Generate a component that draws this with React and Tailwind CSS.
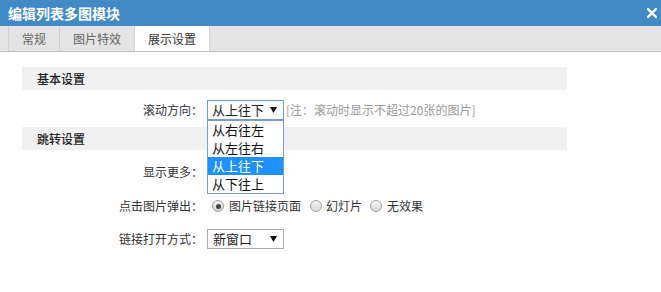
import React from "react";

const Arrow = () => (
  <svg width="7" height="6" viewBox="0 0 7 6" className="shrink-0">
    <polygon points="0,0 7,0 3.5,6" fill="#111" />
  </svg>
);

const Radio = ({ checked, className = "" }) => (
  <span
    className={
      "relative inline-flex h-[12px] w-[12px] shrink-0 items-center justify-center rounded-full border border-[#a0a0a0] bg-gradient-to-b from-[#f4f4f4] to-[#d8d8d8] " +
      className
    }
  >
    {checked && <span className="h-[5px] w-[5px] rounded-full bg-[#444]" />}
  </span>
);

export default function App() {
  const font = { fontFamily: '"Noto Sans CJK SC", "Noto Sans", sans-serif' };
  return (
    <div className="relative h-[292px] w-[661px] overflow-hidden bg-white text-[12px] text-[#333]" style={font}>
      {/* title bar */}
      <div className="flex h-[26px] items-center justify-between bg-[#4189c7] pl-[8px] pr-[4px]">
        <span className="text-[14px] font-bold leading-none text-white">编辑列表多图模块</span>
        <svg width="10" height="10" viewBox="0 0 10 10" className="mr-[0px]">
          <path d="M1 1 L9 9 M9 1 L1 9" stroke="#fff" strokeWidth="2.4" strokeLinecap="square" />
        </svg>
      </div>
      {/* tabs */}
      <div className="flex h-[26px] items-stretch border-b border-[#bdbdbd] bg-[#e4e4e4] pl-[8px]">
        <div className="flex items-center border-l border-[#cfcfcf] px-[13px] text-[#666]">常规</div>
        <div className="flex items-center border-l border-[#cfcfcf] px-[13px] text-[#666]">图片特效</div>
        <div className="flex items-center border-x border-[#cfcfcf] bg-white px-[13px] text-[#333]">展示设置</div>
      </div>

      {/* content */}
      <div className="pl-[22px]">
        <div className="mt-[15px] flex h-[23px] w-[545px] items-center bg-[#f0f0f0] pl-[15px] font-medium text-[#222]">基本设置</div>

        <div className="mt-[10px] flex h-[20px] items-center">
          <div className="w-[181px] text-right">滚动方向：</div>
          <div className="relative ml-[4px]">
            <div className="flex h-[20px] w-[77px] items-center justify-between border border-[#6f9bd6] pl-[4px] pr-[6px] text-[13px] text-[#222]">
              <span>从上往下</span>
              <Arrow />
            </div>
            <div className="absolute left-0 top-[20px] z-10 w-[77px] border border-[#7d9ac9] bg-white text-[13px] text-[#111]">
              <div className="flex h-[18px] items-center pl-[4px]">从右往左</div>
              <div className="flex h-[18px] items-center pl-[4px]">从左往右</div>
              <div className="flex h-[18px] items-center bg-[#1e90ff] pl-[4px] text-white">从上往下</div>
              <div className="flex h-[18px] items-center pl-[4px]">从下往上</div>
            </div>
          </div>
          <span className="ml-[2px] text-[#999]">[注：滚动时显示不超过20张的图片]</span>
        </div>

        <div className="mt-[7px] flex h-[23px] w-[545px] items-center bg-[#f0f0f0] pl-[15px] font-medium text-[#222]">跳转设置</div>

        <div className="mt-[12px] flex h-[20px] items-center">
          <div className="w-[181px] text-right">显示更多：</div>
        </div>

        <div className="mt-[14px] flex h-[20px] items-center">
          <div className="w-[181px] text-right">点击图片弹出：</div>
          <div className="ml-[4px] flex items-center">
            <Radio checked className="ml-[5px]" />
            <span className="ml-[5px]">图片链接页面</span>
            <Radio className="ml-[9px]" />
            <span className="ml-[4px]">幻灯片</span>
            <Radio className="ml-[8px]" />
            <span className="ml-[5px]">无效果</span>
          </div>
        </div>

        <div className="mt-[13px] flex h-[20px] items-center">
          <div className="w-[181px] text-right">链接打开方式：</div>
          <div className="ml-[4px] flex h-[20px] w-[77px] items-center justify-between border border-[#a9a9a9] pl-[5px] pr-[6px] text-[13px] text-[#222]">
            <span>新窗口</span>
            <Arrow />
          </div>
        </div>
      </div>
    </div>
  );
}
